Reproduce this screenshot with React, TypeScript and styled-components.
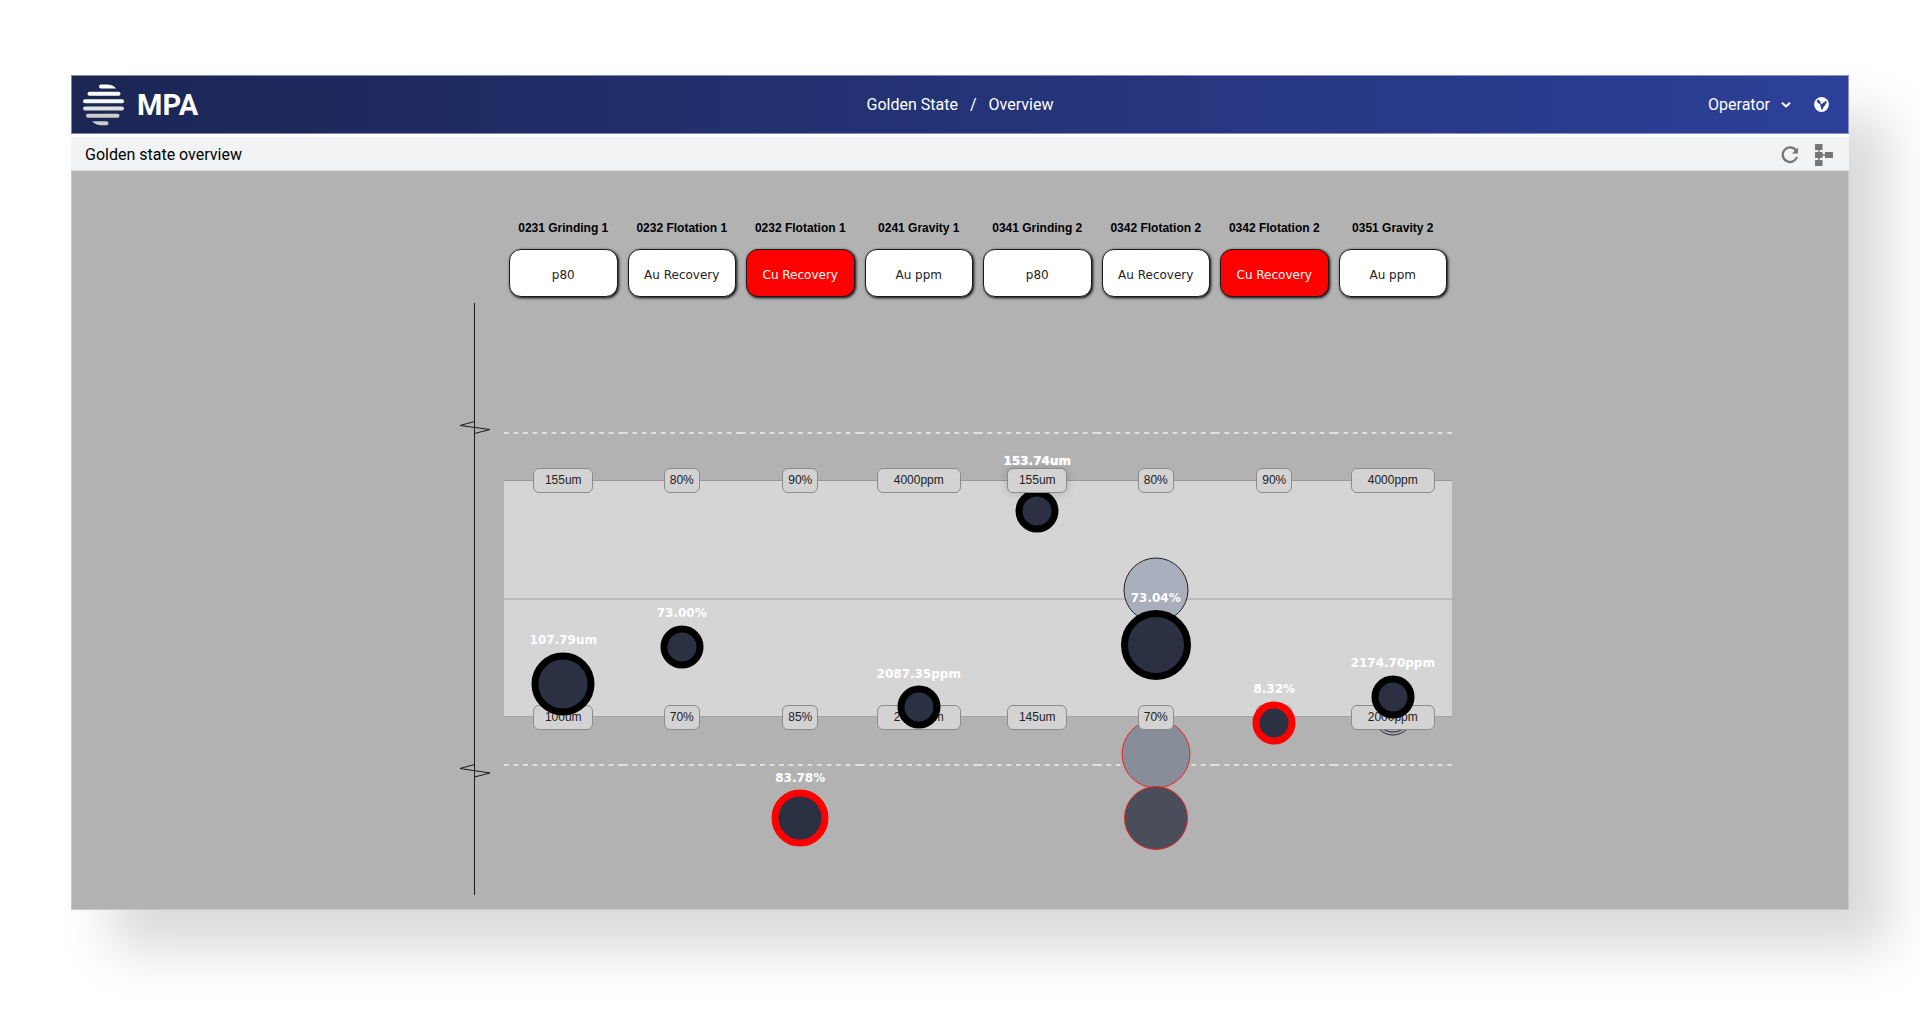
import React from "react";
import styled, { createGlobalStyle, css } from "styled-components";

const GlobalStyle = createGlobalStyle`
  * { box-sizing: border-box; }
  body { margin: 0; background: #fff; font-family: Roboto, "Liberation Sans", sans-serif; }
`;

const sans = css`font-family: "Liberation Sans", Arial, sans-serif;`;
const wide = css`font-family: Verdana, "DejaVu Sans", sans-serif;`;

const Page = styled.div`
  padding: 75px 71px 117px;
`;

const Window = styled.div`
  background: #fff;
  box-shadow: 40px 40px 50px rgba(0, 0, 0, 0.15);
`;

const TopBar = styled.header`
  display: grid;
  grid-template-columns: 1fr auto 1fr;
  align-items: center;
  height: 59px;
  padding: 0 11px;
  color: #fff;
  font-size: 16px;
  line-height: 20px;
  border: 1px solid rgba(255, 255, 255, 0.45);
  background: linear-gradient(90deg, #1b2654, #2d4099) border-box;
`;

const Brand = styled.a`
  display: flex;
  align-items: center;
  gap: 12px;
  justify-self: start;
  color: #fff;
  font-size: 29px;
  line-height: 32px;
  font-weight: 700;
  text-decoration: none;
`;

const Crumbs = styled.nav`
  display: flex;
  gap: 12px;
`;

const Crumb = styled.a`
  color: #fff;
  text-decoration: none;
`;

const TopActions = styled.div`
  display: flex;
  align-items: center;
  gap: 23px;
  justify-self: end;
  padding-right: 8px;
`;

const PlainButton = styled.button`
  display: flex;
  align-items: center;
  gap: 11px;
  padding: 0;
  border: 0;
  background: none;
  color: inherit;
  font: inherit;
  cursor: pointer;
`;

const SubBar = styled.div`
  display: flex;
  align-items: center;
  justify-content: space-between;
  height: 34px;
  margin-top: 3px;
  padding: 2px 16px 0 14px;
  background: #f2f3f5;
  border-bottom: 1px solid #dadcdd;
  color: #000;
`;

const Title = styled.h1`
  margin: 0;
  font-size: 16px;
  line-height: 20px;
  font-weight: 400;
`;

const Tools = styled.div`
  display: flex;
  align-items: center;
  gap: 16px;
  color: #757575;
`;

const Stage = styled.main`
  display: flex;
  justify-content: center;
  padding: 49px 16px 14px;
  background: #b2b2b2;
  border: 1px solid #c8c8c8;
  border-top: 0;
`;

const Board = styled.div`
  width: 100%;
  max-width: 1000px;
  padding-right: 8px;
`;

const Heads = styled.div`
  display: grid;
  grid-template-columns: repeat(8, minmax(0, 1fr));
  margin-left: 44px;
`;

const Head = styled.div`
  display: flex;
  flex-direction: column;
  gap: 13px;
  padding: 0 5px;
`;

const HeadTitle = styled.h2`
  ${sans}
  margin: 0;
  color: #000;
  font-size: 12px;
  line-height: 16px;
  font-weight: 700;
  text-align: center;
  white-space: nowrap;
`;

const Metric = styled.button<{ $alert?: boolean }>`
  ${wide}
  height: 48px;
  padding: 4px 0 0;
  border: 1px solid #1c1c1c;
  border-radius: 12px;
  background: ${(p) => (p.$alert ? "#f00" : "#fff")};
  color: ${(p) => (p.$alert ? "#fff" : "#222")};
  font-size: 12px;
  line-height: 16px;
  box-shadow: 1px 1px 3px #000;
  cursor: pointer;
`;

const Plot = styled.div`
  display: flex;
  height: 592px;
  margin-top: 6px;
`;

const Axis = styled.svg`
  flex: none;
  overflow: visible;
`;

const Canvas = styled.div`
  position: relative;
  flex: 1;
  display: grid;
  grid-template-columns: repeat(8, minmax(0, 1fr));
`;

const Band = styled.div`
  position: absolute;
  left: 0;
  right: 0;
  top: 177px;
  height: 237px;
  background: linear-gradient(#bbb, #bbb) center / 100% 2px no-repeat #d5d5d5;
  border-top: 1px solid #999;
  border-bottom: 1px solid #a2a2a2;
`;

const Column = styled.div`
  position: relative;
`;

const Limit = styled.div<{ $low?: boolean }>`
  position: absolute;
  left: 0;
  right: 0;
  top: ${(p) => (p.$low ? 461 : 129)}px;
  height: 2px;
  background: linear-gradient(90deg, #e0e0e0 53%, transparent 53%) 0 0 / 8% 100%;
`;

const Pill = styled.div<{ $low?: boolean; $raised?: boolean; $chars: number }>`
  ${sans}
  position: absolute;
  z-index: 2;
  top: ${(p) => (p.$low ? 402 : 165)}px;
  left: 50%;
  width: ${(p) => p.$chars}em;
  height: 25px;
  transform: translateX(-50%);
  border: 1px solid #8c8c8c;
  border-radius: 6px;
  background: #d3d3d3;
  color: #222;
  font-size: 12px;
  line-height: 22px;
  text-align: center;
  box-shadow: ${(p) => (p.$raised ? "0 0 8px rgba(0, 0, 0, 0.2)" : "none")};
`;

type Tone = "live" | "alert" | "old" | "oldAlert" | "olderAlert";

const tones: Record<Tone, { ring: string; fill: string; width: number }> = {
  live: { ring: "#000", fill: "#2b3142", width: 7 },
  alert: { ring: "#f00", fill: "#2b3142", width: 7 },
  old: { ring: "#222", fill: "#a8aebb", width: 1 },
  oldAlert: { ring: "#e22", fill: "#878d99", width: 1 },
  olderAlert: { ring: "#e22", fill: "#4a4e5b", width: 1 },
};

const Dot = styled.div<{ $tone: Tone; $size: number; $under?: boolean }>`
  position: absolute;
  z-index: ${(p) => (p.$under ? 1 : 3)};
  left: 50%;
  width: ${(p) => p.$size}px;
  height: ${(p) => p.$size}px;
  transform: translate(-50%, -50%);
  border-radius: 50%;
  border: ${(p) => tones[p.$tone].width}px solid ${(p) => tones[p.$tone].ring};
  background: ${(p) => tones[p.$tone].fill};
`;

const Reading = styled.div<{ $raised?: boolean }>`
  ${wide}
  position: absolute;
  z-index: 4;
  left: 50%;
  transform: translate(-50%, -50%);
  color: #fff;
  font-size: 12px;
  line-height: 16px;
  font-weight: 700;
  white-space: nowrap;
  text-shadow: ${(p) => (p.$raised ? "0 0 1px #fff" : "none")};
`;

type DotData = { y: number; size: number; tone: Tone; under?: boolean };
type ColumnData = {
  title: string;
  metric: string;
  alert?: boolean;
  high: string;
  low: string;
  raised?: boolean;
  reading: { text: string; y: number };
  dots: DotData[];
};

const columns: ColumnData[] = [
  {
    title: "0231 Grinding 1", metric: "p80", high: "155um", low: "100um",
    reading: { text: "107.79um", y: 337 },
    dots: [{ y: 381, size: 63, tone: "live" }],
  },
  {
    title: "0232 Flotation 1", metric: "Au Recovery", high: "80%", low: "70%",
    reading: { text: "73.00%", y: 310 },
    dots: [{ y: 344, size: 43, tone: "live" }],
  },
  {
    title: "0232 Flotation 1", metric: "Cu Recovery", alert: true, high: "90%", low: "85%",
    reading: { text: "83.78%", y: 475 },
    dots: [{ y: 515, size: 57, tone: "alert" }],
  },
  {
    title: "0241 Gravity 1", metric: "Au ppm", high: "4000ppm", low: "2000ppm",
    reading: { text: "2087.35ppm", y: 371 },
    dots: [{ y: 404, size: 43, tone: "live" }],
  },
  {
    title: "0341 Grinding 2", metric: "p80", high: "155um", low: "145um", raised: true,
    reading: { text: "153.74um", y: 158 },
    dots: [{ y: 208, size: 43, tone: "live", under: true }],
  },
  {
    title: "0342 Flotation 2", metric: "Au Recovery", high: "80%", low: "70%",
    reading: { text: "73.04%", y: 295 },
    dots: [
      { y: 287, size: 65, tone: "old", under: true },
      { y: 451, size: 69, tone: "oldAlert", under: true },
      { y: 515, size: 64, tone: "olderAlert", under: true },
      { y: 342, size: 70, tone: "live" },
    ],
  },
  {
    title: "0342 Flotation 2", metric: "Cu Recovery", alert: true, high: "90%", low: "85%",
    reading: { text: "8.32%", y: 386 },
    dots: [{ y: 420, size: 43, tone: "alert" }],
  },
  {
    title: "0351 Gravity 2", metric: "Au ppm", high: "4000ppm", low: "2000ppm",
    reading: { text: "2174.70ppm", y: 360 },
    dots: [
      { y: 413, size: 39, tone: "old", under: true },
      { y: 410, size: 39, tone: "old", under: true },
      { y: 394, size: 43, tone: "live" },
    ],
  },
];

const Logo = () => (
  <svg width="42" height="42" viewBox="0 0 42 42" aria-hidden="true">
    <defs>
      <linearGradient id="stripe" x1="0" y1="0" x2="0" y2="42" gradientUnits="userSpaceOnUse">
        <stop offset="0.35" stopColor="#fff" />
        <stop offset="0.75" stopColor="#ccc" />
      </linearGradient>
    </defs>
    <g fill="url(#stripe)">
      <path d="M18 .5h6c4 0 7 1.600 9.200 4H18a2 2 0 0 1 0-4Z" />
      <rect x="4.500" y="7.800" width="33" height="4" rx="2" />
      <rect x="0" y="15.200" width="41" height="4" rx="2" />
      <rect x="0" y="22.500" width="41" height="4" rx="2" />
      <rect x="3" y="29.800" width="33.500" height="4" rx="2" />
      <path d="M9 37.200H23.500a2 2 0 0 1 0 4h-5c-4 0-7-1.500-9.500-4Z" />
    </g>
  </svg>
);

const Chevron = () => (
  <svg width="10" height="10" viewBox="0 0 10 10" aria-hidden="true">
    <path d="M1 2.800 5 6.500 9 2.800" fill="none" stroke="#fff" strokeWidth="2" />
  </svg>
);

const Globe = () => (
  <svg width="15" height="15" viewBox="0 0 15 15" aria-hidden="true">
    <circle cx="7.500" cy="7.500" r="7.400" fill="#fff" />
    <path
      d="M2.800 3.200c.2 1.700.8 3.200 2.400 3.600 1 .3 1.400 1 1.300 2 0 1.200.6 1.600.7 2.900l.6 1.200c1.400-.8 1.200-2 2-3.100.7-1 1.600-1.600 1.800-2.800l1.200-1.700-1.400-1.800-.8 1.700-1.700.6-1 1.500-1.500-1 .3-1.500-1.400-.7-.4-1.500Z"
      fill="#2c3e96"
    />
  </svg>
);

const Refresh = () => (
  <svg width="18" height="18" viewBox="0 0 18 18" aria-hidden="true">
    <path d="M14.800 4.200A7.300 7.300 0 1 0 16 11" fill="none" stroke="currentColor" strokeWidth="2.300" />
    <path d="M17 1.500V7.500H11Z" fill="currentColor" />
  </svg>
);

const Tree = () => (
  <svg width="18" height="22" viewBox="0 0 18 22" aria-hidden="true">
    <path d="M4 3v16M4 11h9" stroke="currentColor" strokeWidth="1.500" />
    <path d="M0 0h7.500v6H0zM0 8h7.500v6H0zM0 16h7.500v6H0zM10 8h8v6h-8z" fill="currentColor" />
  </svg>
);

export default function App() {
  return (
    <>
      <GlobalStyle />
      <Page>
        <Window>
          <TopBar>
            <Brand href="#home">
              <Logo />
              MPA
            </Brand>
            <Crumbs aria-label="Breadcrumb">
              <Crumb href="#site">Golden State</Crumb>
              <span>/</span>
              <Crumb href="#overview">Overview</Crumb>
            </Crumbs>
            <TopActions>
              <PlainButton type="button">
                Operator
                <Chevron />
              </PlainButton>
              <PlainButton type="button" aria-label="Language">
                <Globe />
              </PlainButton>
            </TopActions>
          </TopBar>
          <SubBar>
            <Title>Golden state overview</Title>
            <Tools>
              <PlainButton type="button" aria-label="Refresh">
                <Refresh />
              </PlainButton>
              <PlainButton type="button" aria-label="Hierarchy">
                <Tree />
              </PlainButton>
            </Tools>
          </SubBar>
          <Stage>
            <Board>
              <Heads>
                {columns.map((c, i) => (
                  <Head key={i}>
                    <HeadTitle>{c.title}</HeadTitle>
                    <Metric type="button" $alert={c.alert}>{c.metric}</Metric>
                  </Head>
                ))}
              </Heads>
              <Plot>
                <Axis width="44" height="592" viewBox="0 0 44 592" aria-hidden="true">
                  <g fill="none" stroke="#1a1a1a">
                    <path d="M14.500 0V592" />
                    <path d="M14.500 118.500 0 122.500 30 126.500 14.500 130.500" />
                    <path d="M14.500 461.500 0 465.500 30 470 14.500 474" />
                  </g>
                </Axis>
                <Canvas>
                  <Band />
                  {columns.map((c, i) => (
                    <Column key={i}>
                      <Limit />
                      <Limit $low />
                      <Pill $chars={c.high.length} $raised={c.raised}>{c.high}</Pill>
                      <Pill $chars={c.low.length} $low>{c.low}</Pill>
                      {c.dots.map((d, j) => (
                        <Dot key={j} $tone={d.tone} $size={d.size} $under={d.under} style={{ top: d.y }} />
                      ))}
                      <Reading $raised={c.raised} style={{ top: c.reading.y }}>{c.reading.text}</Reading>
                    </Column>
                  ))}
                </Canvas>
              </Plot>
            </Board>
          </Stage>
        </Window>
      </Page>
    </>
  );
}
